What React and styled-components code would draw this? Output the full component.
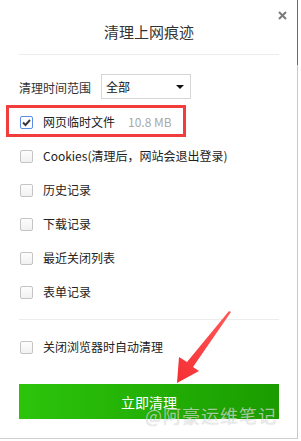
import React from "react";
import styled, { createGlobalStyle } from "styled-components";

const Global = createGlobalStyle`
  html, body { margin: 0; padding: 0; background: #fff; }
  body { font-family: "Noto Sans CJK SC", "Noto Sans", sans-serif; color: #333; }
  * { box-sizing: border-box; }
`;

const Page = styled.div`
  display: flex;
  width: 301px;
  height: 441px;
  align-items: flex-start;
`;

const Panel = styled.div`
  position: relative;
  width: 297px;
  height: 439px;
  padding: 0 18px 0 19px;
  background: #fff;
  border-bottom: 1px solid #cfcfcf;
  display: flex;
  flex-direction: column;
`;

const Edge = styled.div`
  width: 2px;
  height: 439px;
  display: flex;
  flex-direction: column;
`;

const EdgePart = styled.div`
  height: ${(p) => (p.$h ? `${p.$h}px` : "auto")};
  flex: ${(p) => (p.$h ? "none" : "1")};
  width: 1px;
  background: ${(p) => p.$c};
`;

const Header = styled.div`
  height: 54px;
  padding-top: 22px;
  text-align: center;
  font-size: 15px;
  line-height: 20px;
  color: #333;
`;

const Close = styled.div`
  position: absolute;
  top: 11px;
  right: 10px;
  width: 9px;
  height: 9px;
  display: flex;
`;

const Divider = styled.div`
  height: 1px;
  background: #ececec;
  margin-top: ${(p) => p.$mt || 0}px;
`;

const TimeRow = styled.div`
  margin-top: 19px;
  height: 25px;
  display: flex;
  align-items: center;
  gap: 10px;
  font-size: 12px;
`;

const Label = styled.span`
  line-height: 16px;
  padding-top: 2px;
`;

const Select = styled.div`
  width: 90px;
  height: 25px;
  border: 1px solid #d6d6d6;
  display: flex;
  align-items: center;
  justify-content: space-between;
  padding: 0 6px 0 4px;
  font-size: 12px;
  color: #111;
`;

const Caret = styled.span`
  width: 0;
  height: 0;
  border-left: 4px solid transparent;
  border-right: 4px solid transparent;
  border-top: 4px solid #111;
`;

const List = styled.div`
  margin-top: ${(p) => p.$mt || 0}px;
  display: flex;
  flex-direction: column;
`;

const Row = styled.label`
  position: relative;
  height: 34px;
  display: flex;
  align-items: center;
  gap: 10px;
  padding-left: 1px;
  font-size: 12px;
  line-height: 16px;
  color: #222;
`;

const Box = styled.span`
  width: 13px;
  height: 13px;
  flex: none;
  border-radius: 2px;
  border: 1px solid ${(p) => (p.$checked ? "#5a8ee6" : "#c4c4c4")};
  background: ${(p) => (p.$checked ? "#fff" : "linear-gradient(#fdfdfd, #f1f1f1)")};
  display: flex;
  align-items: center;
  justify-content: center;
`;

const Size = styled.span`
  color: #aaa;
  margin-left: 13px;
`;

const Mark = styled.div`
  position: absolute;
  left: -13px;
  top: 0;
  width: 180px;
  height: 32px;
  border: 3px solid #f23d3d;
  pointer-events: none;
`;

const ButtonWrap = styled.div`
  position: relative;
  margin-top: 20px;
`;

const Button = styled.button`
  width: 260px;
  height: 35px;
  border: none;
  padding: 0;
  background: linear-gradient(to right, #2cc40b, #1a9c00);
  color: #fff;
  font-family: inherit;
  font-size: 14px;
  line-height: 20px;
  display: flex;
  align-items: center;
  justify-content: center;
`;

const Watermark = styled.span`
  position: absolute;
  left: 126px;
  top: 22px;
  font-size: 18px;
  line-height: 18px;
  letter-spacing: 1px;
  white-space: nowrap;
  color: rgba(255, 255, 255, 0.6);
  text-shadow: 0 0 1px rgba(0, 0, 0, 0.25);
  pointer-events: none;
`;

const Arrow = styled.svg`
  position: absolute;
  left: 170px;
  top: 305px;
  pointer-events: none;
`;

function Check({ checked }) {
  return (
    <Box $checked={checked}>
      {checked && (
        <svg width="11" height="11" viewBox="0 0 11 11">
          <path d="M2 5.5 L4.5 8 L9 3" fill="none" stroke="#3a3a3a" strokeWidth="2" />
        </svg>
      )}
    </Box>
  );
}

const items = ["Cookies(清理后，网站会退出登录)", "历史记录", "下载记录", "最近关闭列表", "表单记录"];

export default function App() {
  return (
    <>
      <Global />
      <Page>
        <Panel>
          <Close>
            <svg width="9" height="9" viewBox="0 0 9 9">
              <path d="M1 1 L8 8 M8 1 L1 8" stroke="#7a7a7a" strokeWidth="2" />
            </svg>
          </Close>
          <Header>清理上网痕迹</Header>
          <Divider />
          <TimeRow>
            <Label>清理时间范围</Label>
            <Select>
              <span>全部</span>
              <Caret />
            </Select>
          </TimeRow>
          <List $mt={6}>
            <Row>
              <Check checked />
              <span>
                网页临时文件<Size>10.8 MB</Size>
              </span>
              <Mark />
            </Row>
            {items.map((t) => (
              <Row key={t}>
                <Check />
                <span>{t}</span>
              </Row>
            ))}
          </List>
          <Divider $mt={10} />
          <List $mt={10}>
            <Row>
              <Check />
              <span>关闭浏览器时自动清理</span>
            </Row>
          </List>
          <ButtonWrap>
            <Button>立即清理</Button>
            <Watermark>@阿豪运维笔记</Watermark>
          </ButtonWrap>
          <Arrow width="70" height="85" viewBox="0 0 70 85">
            <defs>
              <linearGradient id="ag" x1="1" y1="0" x2="0" y2="1">
                <stop offset="0" stopColor="#ff5a5a" />
                <stop offset="1" stopColor="#f42f33" />
              </linearGradient>
            </defs>
            <polygon
              points="7,78 9,52 17,57 59,6 61,7 23,62 29,66"
              fill="url(#ag)"
            />
          </Arrow>
        </Panel>
        <Edge>
          <EdgePart $h={65} $c="#2f78c8" />
          <EdgePart $c="#c8c8c8" />
        </Edge>
      </Page>
    </>
  );
}
